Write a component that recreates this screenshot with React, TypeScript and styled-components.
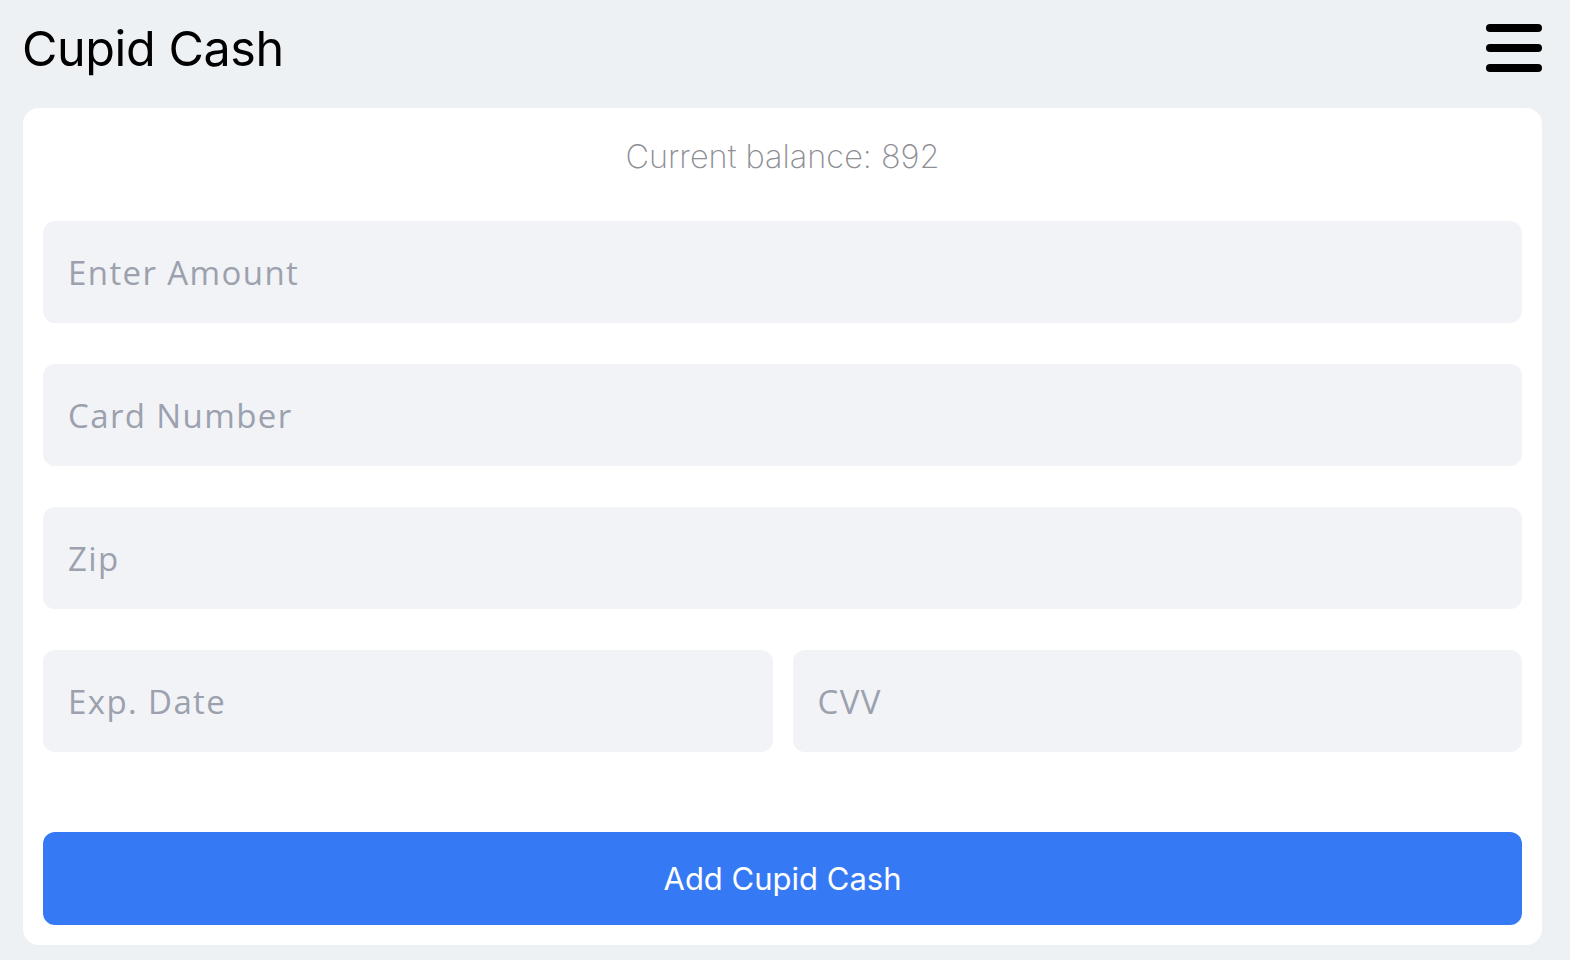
import React, { useState } from "react";
import styled, { createGlobalStyle } from "styled-components";

const GlobalStyle = createGlobalStyle`
  * {
    box-sizing: border-box;
  }

  body {
    margin: 0;
    background: #eef1f3;
    font-family: Inter, "Liberation Sans", sans-serif;
  }
`;

const Page = styled.div`
  min-height: 960px;
  padding: 0 28px 16px 23px;
`;

const Header = styled.header`
  height: 96px;
  margin-bottom: 12px;
  display: flex;
  align-items: center;
  justify-content: space-between;
`;

const Title = styled.h1`
  margin: 0 0 0 -1px;
  font-size: 48.5px;
  font-weight: 400;
  color: #000;
  letter-spacing: -0.4px;
`;

const MenuButton = styled.button`
  width: 56px;
  height: 48px;
  padding: 0;
  border: none;
  background: none;
  display: flex;
  flex-direction: column;
  justify-content: space-between;
  cursor: pointer;
`;

const MenuBar = styled.span`
  display: block;
  height: 8px;
  border-radius: 4px;
  background: #000;
`;

const Card = styled.form`
  background: #fff;
  border-radius: 16px;
  padding: 20px;
  display: flex;
  flex-direction: column;
`;

const Balance = styled.p`
  margin: 2px 0 37px;
  line-height: 54px;
  text-align: center;
  font-size: 32.5px;
  font-weight: 200;
  color: #8e8e93;
`;

const Fields = styled.div`
  display: flex;
  flex-direction: column;
  gap: 41px;
`;

const Row = styled.div`
  display: grid;
  grid-template-columns: 1fr 1fr;
  gap: 20px;
`;

const Field = styled.input`
  width: 100%;
  height: 102px;
  padding: 0 25px;
  border: none;
  border-radius: 12px;
  background: #f2f3f7;
  font-family: "Open Sans", sans-serif;
  font-size: 33px;
  letter-spacing: 1.4px;
  color: #333;
  outline: none;

  &::placeholder {
    color: #9ba1ad;
  }
`;

const SubmitButton = styled.button`
  margin-top: 80px;
  height: 93px;
  border: none;
  border-radius: 12px;
  background: #3679f5;
  color: #fff;
  font-family: Inter, "Liberation Sans", sans-serif;
  font-size: 31px;
  font-weight: 400;
  cursor: pointer;
`;

const App = () => {
  const [form, setForm] = useState({
    amount: "",
    card: "",
    zip: "",
    exp: "",
    cvv: "",
  });

  const update =
    (key: keyof typeof form) => (e: React.ChangeEvent<HTMLInputElement>) =>
      setForm({ ...form, [key]: e.target.value });

  return (
    <Page>
      <GlobalStyle />
      <Header>
        <Title>Cupid Cash</Title>
        <MenuButton type="button" aria-label="Menu">
          <MenuBar />
          <MenuBar />
          <MenuBar />
        </MenuButton>
      </Header>
      <Card onSubmit={(e) => e.preventDefault()}>
        <Balance>Current balance: 892</Balance>
        <Fields>
          <Field placeholder="Enter Amount" value={form.amount} onChange={update("amount")} />
          <Field placeholder="Card Number" value={form.card} onChange={update("card")} />
          <Field placeholder="Zip" value={form.zip} onChange={update("zip")} />
          <Row>
            <Field placeholder="Exp. Date" value={form.exp} onChange={update("exp")} />
            <Field placeholder="CVV" value={form.cvv} onChange={update("cvv")} />
          </Row>
        </Fields>
        <SubmitButton type="submit">Add Cupid Cash</SubmitButton>
      </Card>
    </Page>
  );
};

export default App;
